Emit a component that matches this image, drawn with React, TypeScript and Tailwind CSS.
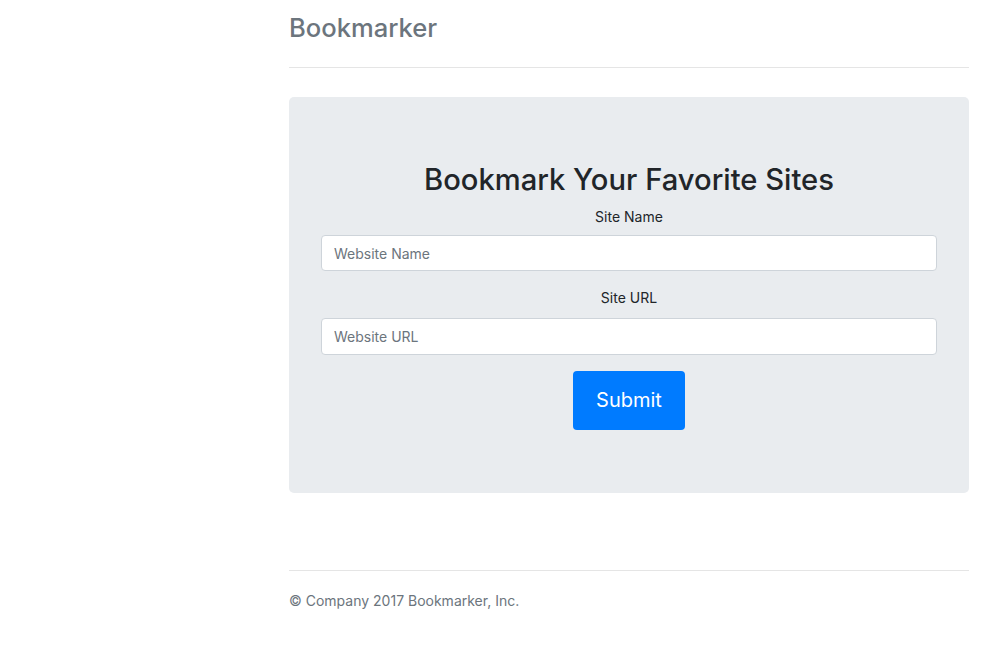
const App = () => {
  return (
    <div
      className="min-h-screen bg-white text-[#212529] text-[14px] leading-[22.5px]"
      style={{ fontFamily: 'Inter, "Liberation Sans", Arial, sans-serif' }}
    >
      <div className="ml-[289px] w-[680px]">
        <header className="pt-[13px] pb-[23px] border-b border-[#e5e5e5]">
          <h3 className="text-[25.6px] leading-[1.2] font-medium text-[#6c757d]">Bookmarker</h3>
        </header>

        <main className="mt-[29px] rounded-[5px] bg-[#e9ecef] px-8 pt-[65px] pb-[63px] text-center">
          <h2 className="mb-[9px] text-[29.2px] leading-[1.2] font-medium">
            Bookmark Your Favorite Sites
          </h2>
          <form className="flex flex-col" onSubmit={(e) => e.preventDefault()}>
            <div className="mb-4 flex flex-col">
              <label className="mb-[7px]">Site Name</label>
              <input
                type="text"
                placeholder="Website Name"
                className="h-[36px] w-full rounded-[4px] border border-[#ced4da] bg-white px-3 text-[14px] text-[#495057] placeholder:text-[#6c757d] outline-none"
              />
            </div>
            <div className="mb-4 flex flex-col">
              <label className="mb-[8px]">Site URL</label>
              <input
                type="text"
                placeholder="Website URL"
                className="h-[37px] w-full rounded-[4px] border border-[#ced4da] bg-white px-3 text-[14px] text-[#495057] placeholder:text-[#6c757d] outline-none"
              />
            </div>
            <div className="flex justify-center">
              <button
                type="submit"
                className="h-[59px] w-[112px] rounded-[4px] bg-[#007bff] text-[20px] text-white"
              >
                Submit
              </button>
            </div>
          </form>
        </main>

        <footer className="mt-[77px] border-t border-[#e5e5e5] pt-[19px]">
          <p className="text-[#6c757d]">© Company 2017 Bookmarker, Inc.</p>
        </footer>
      </div>
    </div>
  );
};

export default App;
